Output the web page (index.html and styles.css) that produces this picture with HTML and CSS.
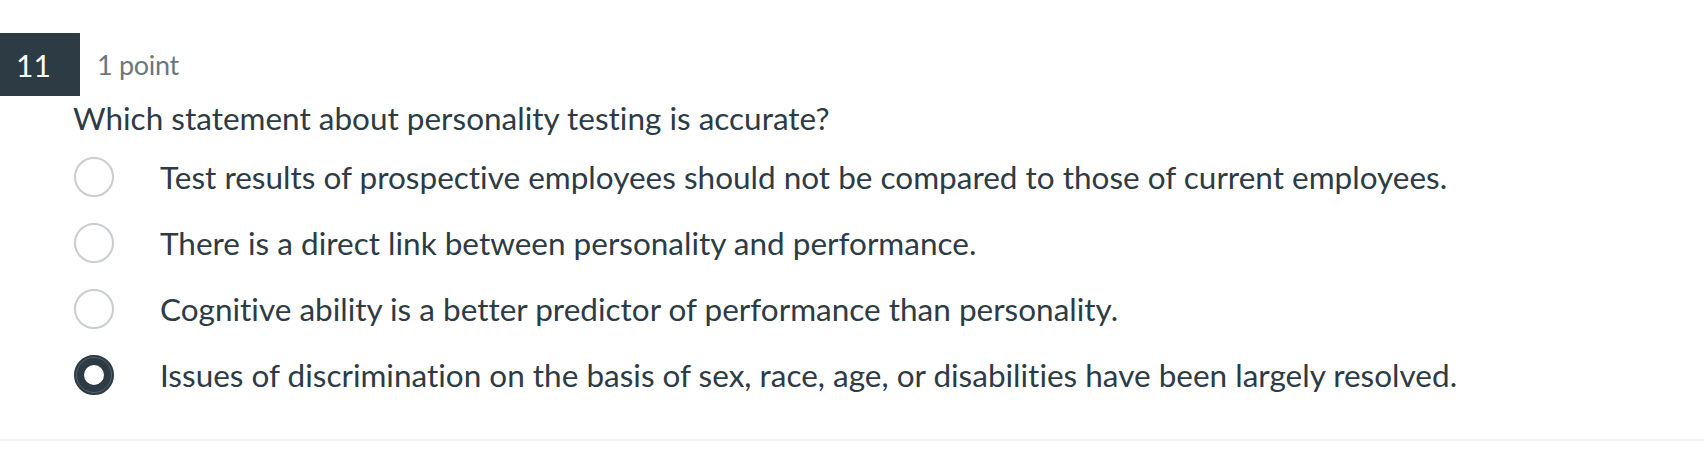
FILE: index.html
```html
<!DOCTYPE html>
<html lang="en">
<head>
  <meta charset="UTF-8" />
  <title>Quiz question 11</title>
  <link rel="stylesheet" href="styles.css">
</head>
<body>
  <div class="question">
    <div class="question-header">
      <div class="number">11</div>
      <div class="points">1 point</div>
    </div>
    <div class="question-text">Which statement about personality testing is accurate?</div>

    <ul class="answers">
      <li class="answer">
        <span class="radio"></span>
        <span class="label">Test results of prospective employees should not be compared to those of current employees.</span>
      </li>
      <li class="answer">
        <span class="radio"></span>
        <span class="label">There is a direct link between personality and performance.</span>
      </li>
      <li class="answer">
        <span class="radio"></span>
        <span class="label">Cognitive ability is a better predictor of performance than personality.</span>
      </li>
      <li class="answer">
        <span class="radio checked"></span>
        <span class="label">Issues of discrimination on the basis of sex, race, age, or disabilities have been largely resolved.</span>
      </li>
    </ul>
  </div>
</body>
</html>
```

FILE: styles.css
```css
body {
  margin: 0;
  padding: 0;
  font-family: Lato, 'Liberation Sans', sans-serif;
  font-variant-ligatures: none;
  color: #2d3b45;
  background: #fff;
}

.question {
  padding-top: 33px;
  padding-bottom: 31px;
  border-bottom: 2px solid #f3f3f3;
}

.question-header {
  display: flex;
  align-items: center;
}

.number {
  box-sizing: border-box;
  width: 80px;
  height: 63px;
  padding-left: 16px;
  background-color: #2d3b45;
  color: #fff;
  font-size: 30px;
  display: flex;
  align-items: center;
}

.points {
  margin-left: 17px;
  font-size: 27px;
  letter-spacing: -0.3px;
  color: #6b7780;
}

.question-text {
  margin: 4px 0 8px 73px;
  font-size: 31.5px;
  line-height: 36px;
}

.answers {
  list-style: none;
  margin: 0;
  padding: 0;
}

.answer {
  display: flex;
  align-items: center;
  height: 66px;
}

.radio {
  box-sizing: border-box;
  width: 40px;
  height: 40px;
  margin-left: 74px;
  border: 2px solid #c7cdd1;
  border-radius: 50%;
  flex-shrink: 0;
}

.radio.checked {
  border: 10px solid #2d3b45;
  position: relative;
}

.radio.checked::before {
  content: '';
  position: absolute;
  top: -8px;
  left: -8px;
  right: -8px;
  bottom: -8px;
  border-radius: 50%;
  border: 1px solid #56616a;
}

.label {
  margin-left: 46px;
  font-size: 31.5px;
}
```
